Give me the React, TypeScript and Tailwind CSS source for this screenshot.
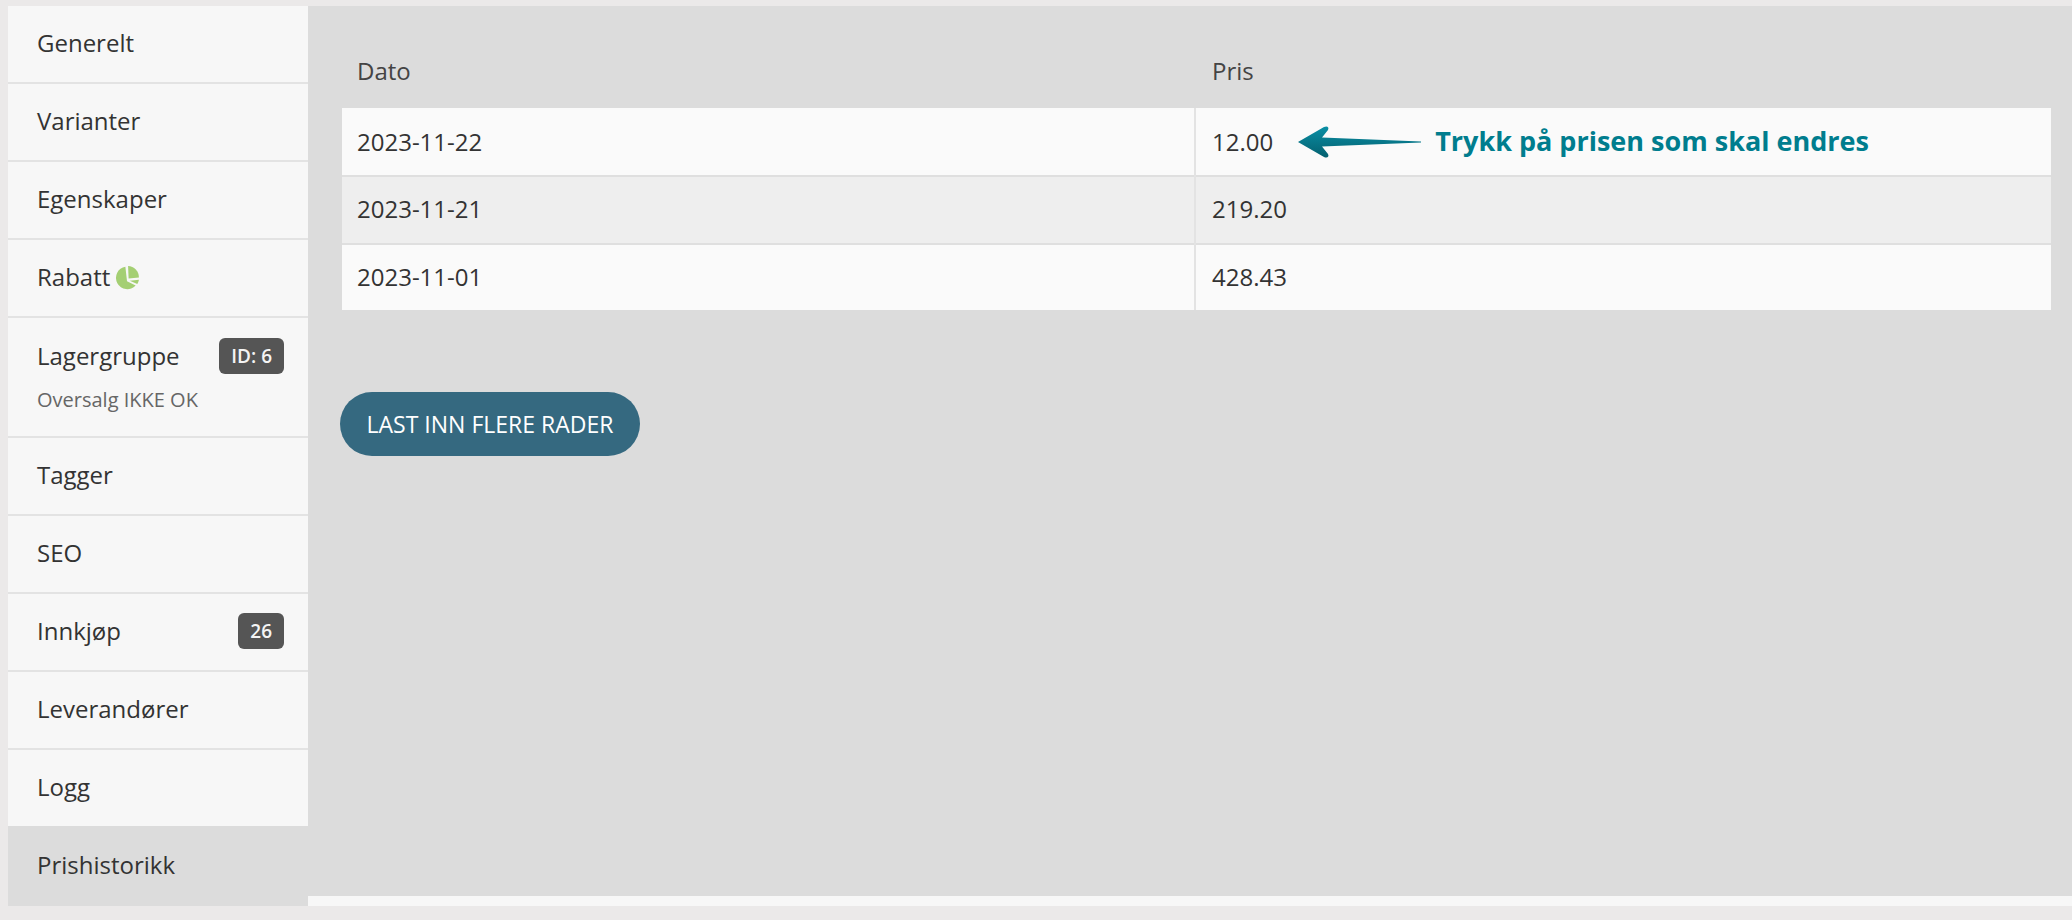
import React from 'react';

const rows = [
  { date: '2023-11-22', price: '12.00', hint: true },
  { date: '2023-11-21', price: '219.20', hint: false },
  { date: '2023-11-01', price: '428.43', hint: false },
];

function Badge({ children }: { children: React.ReactNode }) {
  return (
    <span className="flex h-[36px] items-center rounded-[6px] bg-[#555555] px-[12px] text-[19px] font-semibold leading-none text-[#f4f4f4]">
      {children}
    </span>
  );
}

function NavItem({ label, badge, icon }: { label: string; badge?: string; icon?: boolean }) {
  return (
    <div className="flex h-[78px] items-center justify-between border-b-2 border-[#e3e3e3] pl-[29px] pr-[24px] pb-[2px]">
      <span className="flex items-center gap-[4px]">
        {label}
        {icon && <PieIcon />}
      </span>
      {badge && <Badge>{badge}</Badge>}
    </div>
  );
}

function PieIcon() {
  return (
    <svg width="26" height="26" viewBox="0 0 24 24" className="mt-[2px]">
      <path d="M10.5 1.5A10.5 10.5 0 1 0 20 19L12 15 10.5 1.5Z" fill="#a4cf73" />
      <path d="M13 1A10.5 10.5 0 0 1 23 11.5L13.5 12.5Z" fill="#a4cf73" />
      <path d="M14.5 14.5L23 13.5A10 10 0 0 1 21.5 17.5Z" fill="#a4cf73" />
    </svg>
  );
}

function Arrow() {
  return (
    <svg width="124" height="34" viewBox="0 0 124 34" className="block shrink-0">
      <defs>
        <linearGradient id="arrowFill" x1="0" y1="0" x2="0" y2="1">
          <stop offset="0" stopColor="#0a8fa5" />
          <stop offset="1" stopColor="#04606f" />
        </linearGradient>
      </defs>
      <path
        d="M1 17L27 2C30 0.5 32.5 2 31 5L25 12.5L124 16.5V17.5L25 21.5L31 29C32.5 32 30 33.5 27 32Z"
        fill="url(#arrowFill)"
      />
    </svg>
  );
}

export default function App() {
  return (
    <div className="min-h-[920px] bg-[#ebe9e9] pl-[8px] pt-[6px] font-['Open_Sans',sans-serif] text-[24px] text-[#333333]">
      <div className="flex h-[900px] bg-[#f7f7f7]">
        <nav className="flex w-[300px] shrink-0 flex-col">
          <NavItem label="Generelt" />
          <NavItem label="Varianter" />
          <NavItem label="Egenskaper" />
          <NavItem label="Rabatt" icon />
          <div className="flex h-[120px] flex-col border-b-2 border-[#e3e3e3] pl-[29px] pr-[24px] pt-[20px]">
            <div className="flex items-center justify-between">
              <span>Lagergruppe</span>
              <Badge>ID: 6</Badge>
            </div>
            <span className="mt-[12px] text-[20px] leading-[27px] text-[#666666]">Oversalg IKKE OK</span>
          </div>
          <NavItem label="Tagger" />
          <NavItem label="SEO" />
          <NavItem label="Innkjøp" badge="26" />
          <NavItem label="Leverandører" />
          <div className="flex h-[76px] items-center pb-[2px] pl-[29px]">Logg</div>
          <div className="flex h-[80px] items-center bg-[#dcdcdc] pb-[2px] pl-[29px]">Prishistorikk</div>
        </nav>
        <main className="h-[890px] flex-1 bg-[#dcdcdc] pl-[34px] pr-[21px]">
          <table className="mt-[22px] w-full table-fixed border-collapse">
            <thead>
              <tr className="h-[80px] text-left text-[#444444]">
                <th className="w-[853px] pl-[15px] pt-[6px] font-normal">Dato</th>
                <th className="pl-[17px] pt-[6px] font-normal">Pris</th>
              </tr>
            </thead>
            <tbody>
              {rows.map((row, i) => (
                <tr
                  key={row.date}
                  className={`${i === 2 ? 'h-[66px]' : 'h-[68px] border-b-2 border-[#dfdfdf]'} ${i === 1 ? 'bg-[#eeeeee]' : 'bg-[#fafafa]'}`}
                >
                  <td className={`border-r-2 border-[#e3e3e3] pl-[15px] ${row.hint ? '' : 'pb-[2px]'}`}>{row.date}</td>
                  <td className={`pl-[16px] ${row.hint ? '' : 'pb-[2px]'}`}>
                    <div className="flex items-center">
                      <span>{row.price}</span>
                      {row.hint && (
                        <>
                          <span className="ml-[24px]"><Arrow /></span>
                          <span className="ml-[14px] text-[27px] font-bold text-[#007d8e]">Trykk på prisen som skal endres</span>
                        </>
                      )}
                    </div>
                  </td>
                </tr>
              ))}
            </tbody>
          </table>
          <button className="mt-[82px] ml-[-2px] h-[64px] w-[300px] rounded-full bg-[#356980] text-[23px] font-medium text-white">
            LAST INN FLERE RADER
          </button>
        </main>
      </div>
    </div>
  );
}
